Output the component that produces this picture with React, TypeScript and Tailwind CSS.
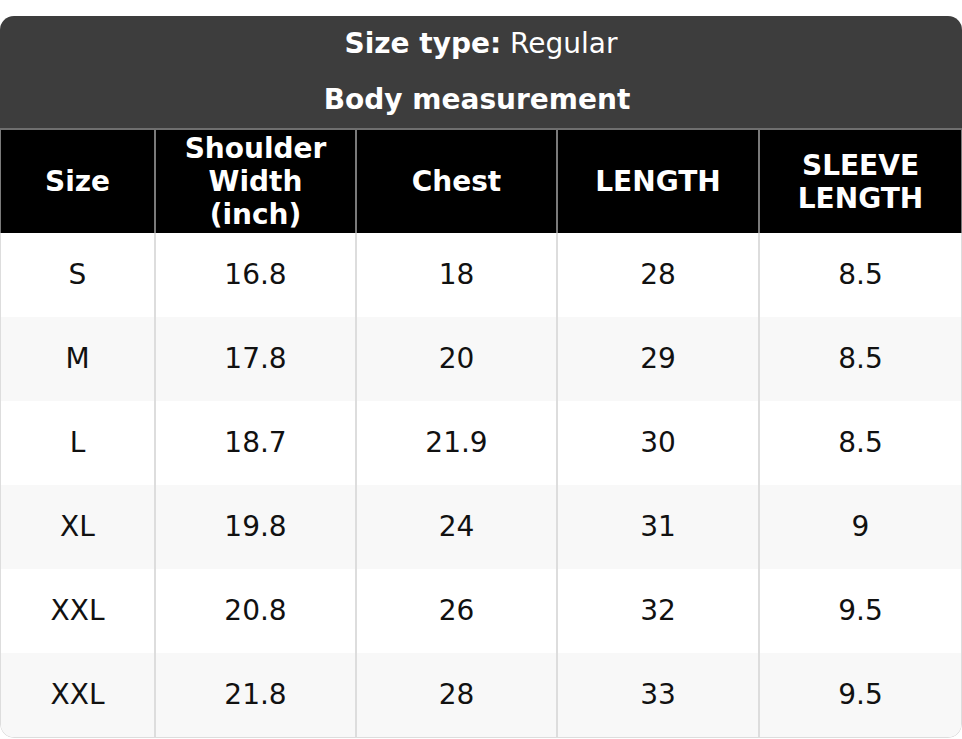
import React from "react";

const rows = [
  ["S", "16.8", "18", "28", "8.5"],
  ["M", "17.8", "20", "29", "8.5"],
  ["L", "18.7", "21.9", "30", "8.5"],
  ["XL", "19.8", "24", "31", "9"],
  ["XXL", "20.8", "26", "32", "9.5"],
  ["XXL", "21.8", "28", "33", "9.5"],
];

const heads: string[][] = [
  ["Size"],
  ["Shoulder", "Width", "(inch)"],
  ["Chest"],
  ["LENGTH"],
  ["SLEEVE", "LENGTH"],
];

export default function App() {
  return (
    <div
      className="w-[962px] bg-white pt-4"
      style={{ fontFamily: '"DejaVu Sans", sans-serif' }}
    >
      <div className="overflow-hidden rounded-[14px]">
        <div className="bg-[#3d3d3d] text-white text-[28px]">
          <div className="flex h-[56px] items-center justify-center">
            <span>
              <b>Size type:</b> Regular
            </span>
          </div>
          <div className="flex h-[56px] items-center justify-center pr-[8px] font-bold">
            Body measurement
          </div>
        </div>
        <div className="h-[2px] bg-[#6f6f6f]" />
        <div className="grid h-[103px] grid-cols-[153px_201px_201px_202px_1fr] border-x border-[#7a7a7a] bg-black text-[28px] font-bold leading-[33px] text-white">
          {heads.map((h, i) => (
            <div
              key={i}
              className={
                "flex flex-col items-center justify-center text-center" +
                (i > 0 ? " border-l-2 border-[#7a7a7a]" : "")
              }
            >
              {h.map((l, j) => (
                <span key={j}>{l}</span>
              ))}
            </div>
          ))}
        </div>
        <div className="overflow-hidden rounded-b-[14px] border-x border-b border-[#dddddd]">
          {rows.map((r, ri) => (
            <div
              key={ri}
              className={
                "grid h-[84px] grid-cols-[153px_201px_201px_202px_1fr] text-[28px] text-[#111111]" +
                (ri % 2 === 1 ? " bg-[#f8f8f8]" : " bg-white")
              }
            >
              {r.map((c, ci) => (
                <div
                  key={ci}
                  className={
                    "flex items-center justify-center" +
                    (ci > 0 ? " border-l-2 border-[#dddddd]" : "")
                  }
                >
                  {c}
                </div>
              ))}
            </div>
          ))}
        </div>
      </div>
    </div>
  );
}
